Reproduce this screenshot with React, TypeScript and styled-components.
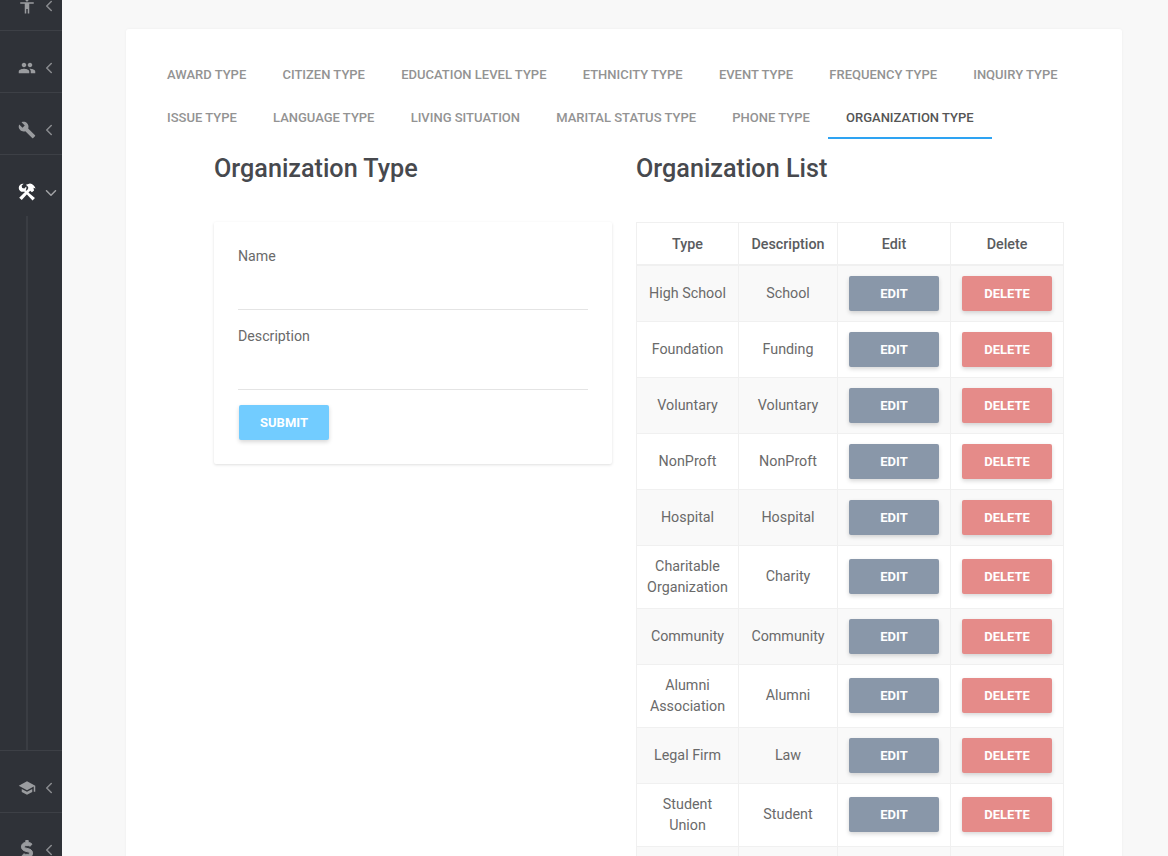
import React from 'react';
import styled, { createGlobalStyle } from 'styled-components';
import { MdAccessibility, MdPeople, MdBuild, MdSchool } from 'react-icons/md';
import { FaDollarSign } from 'react-icons/fa';
import { FiChevronLeft, FiChevronDown } from 'react-icons/fi';

const GlobalStyle = createGlobalStyle`
  html, body {
    margin: 0;
    height: 856px;
    overflow: hidden;
    background: #f8f8f8;
    font-family: Roboto, "Liberation Sans", sans-serif;
  }
`;

const Page = styled.div`
  display: flex;
  height: 856px;
  overflow: hidden;
`;

const Sidebar = styled.aside`
  flex: 0 0 62px;
  height: 856px;
  overflow: hidden;
  background: #2f3238;
`;

const NavList = styled.div`
  margin-top: -31px;
`;

const NavSection = styled.div<{ $height?: number }>`
  height: ${props => props.$height || 62}px;
  box-sizing: border-box;
  border-bottom: 1px solid #3d4046;
`;

const NavRow = styled.div<{ $active?: boolean }>`
  height: 61px;
  box-sizing: border-box;
  padding: 12px 0 0 18px;
  display: flex;
  align-items: center;
  color: ${props => (props.$active ? '#ffffff' : '#9a9c9f')};
`;

const NavIcon = styled.span`
  display: flex;
  width: 18px;
  justify-content: center;
  font-size: 20px;
`;

const NavArrow = styled.span<{ $open?: boolean }>`
  display: flex;
  margin-left: ${props => (props.$open ? 6 : 4)}px;
  margin-top: ${props => (props.$open ? 2 : 0)}px;
  font-size: 18px;
  color: ${props => (props.$open ? '#b5b6b8' : 'inherit')};
  opacity: 0.85;
`;

const DollarIcon = styled(FaDollarSign)`
  stroke: currentColor;
  stroke-width: 24px;
`;

const SubLine = styled.div`
  width: 2px;
  height: 534px;
  margin-left: 26px;
  background: #3a3d43;
`;

const Content = styled.main`
  flex: 1;
  padding: 29px 46px 0 64px;
`;

const Card = styled.section`
  background: #fff;
  border-radius: 3px;
  box-shadow: 0 0 3px rgba(0, 0, 0, 0.05);
  padding: 24px 23px 0;
  height: 900px;
`;

const Tabs = styled.nav`
  display: flex;
  flex-wrap: wrap;
`;

const Tab = styled.div<{ $active?: boolean }>`
  height: 43px;
  box-sizing: border-box;
  padding: 2px 18.2px 0 18px;
  display: flex;
  align-items: center;
  font-size: 13px;
  font-weight: 500;
  color: ${props => (props.$active ? '#555' : '#939393')};
  border-bottom: 2px solid ${props => (props.$active ? '#2ea3f2' : 'transparent')};
`;

const Columns = styled.div`
  display: flex;
  gap: 24px;
  padding-left: 65px;
  padding-top: 15px;
`;

const LeftColumn = styled.div`
  width: 398px;
`;

const RightColumn = styled.div`
  width: 428px;
`;

const Heading = styled.h2`
  margin: 0 0 38px;
  height: 30px;
  line-height: 30px;
  font-size: 25.2px;
  font-weight: 500;
  color: #47494e;
`;

const FormCard = styled.form`
  box-sizing: border-box;
  height: 242px;
  padding: 24px;
  background: #fff;
  border-radius: 2px;
  box-shadow: 0 1px 3px rgba(0, 0, 0, 0.13);
`;

const Field = styled.div`
  height: 64px;
  margin-bottom: 16px;
  box-sizing: border-box;
  border-bottom: 1px solid #e4e4e4;
`;

const Label = styled.label`
  display: block;
  padding-top: 1px;
  line-height: 18px;
  font-size: 14.2px;
  color: #6a6a6a;
`;

const Button = styled.button<{ $color: string }>`
  width: 90px;
  height: 35px;
  padding: 0;
  border: 0;
  border-radius: 2px;
  background: ${props => props.$color};
  color: #fff;
  font-family: inherit;
  font-size: 13px;
  font-weight: 700;
  box-shadow: 0 2px 4px rgba(0, 0, 0, 0.16);
`;

const SubmitButton = styled(Button)`
  display: block;
  margin: -1px 0 0 1px;
`;

const Table = styled.table`
  width: 427px;
  table-layout: fixed;
  border-collapse: collapse;
  font-size: 14.3px;
  color: #6a6a6a;
`;

const HeadCell = styled.th`
  height: 41px;
  padding: 0;
  border: 1px solid #f0f0f0;
  border-bottom-width: 2px;
  font-weight: 500;
  color: #5a5c60;
  text-align: center;
`;

const Row = styled.tr<{ $height: number }>`
  height: ${props => props.$height}px;
  &:nth-child(odd) {
    background: #f9f9f9;
  }
`;

const Cell = styled.td`
  padding: 0 8px;
  border: 1px solid #f0f0f0;
  line-height: 21px;
  text-align: center;
`;

const HammerWrench = () => (
  <svg width="19" height="18" viewBox="0 0 24 24" fill="currentColor">
    <path d="M1 6.5 C1 3 4 0.5 7.5 1 L4.8 3.8 L5.6 6.6 L8.4 7.4 L11 4.8 C11.5 7 11 8.6 10.2 9.6 L22.6 20 L19.4 23.2 L8.2 11.4 C4.8 12.6 1 10.4 1 6.5 Z" />
    <path d="M10.5 2.2 L16 0.8 C19.5 1.4 22.4 4 23.4 7.4 L20.6 6.2 L21.4 10 L18.6 12.2 L16.2 10.2 L5 22.8 L1.6 19.6 L13.4 8 L13.6 5.4 Z" />
  </svg>
);

const tabs = [
  'Award Type', 'Citizen Type', 'Education Level Type', 'Ethnicity Type', 'Event Type', 'Frequency Type', 'Inquiry Type',
  'Issue Type', 'Language Type', 'Living Situation', 'Marital Status Type', 'Phone Type', 'Organization Type',
];

const rows: { type: React.ReactNode; description: string; height: number }[] = [
  { type: 'High School', description: 'School', height: 56 },
  { type: 'Foundation', description: 'Funding', height: 56 },
  { type: 'Voluntary', description: 'Voluntary', height: 56 },
  { type: 'NonProft', description: 'NonProft', height: 56 },
  { type: 'Hospital', description: 'Hospital', height: 56 },
  { type: <>Charitable<br />Organization</>, description: 'Charity', height: 63 },
  { type: 'Community', description: 'Community', height: 56 },
  { type: <>Alumni<br />Association</>, description: 'Alumni', height: 63 },
  { type: 'Legal Firm', description: 'Law', height: 56 },
  { type: <>Student<br />Union</>, description: 'Student', height: 63 },
];

const App = () => {
  return (
    <>
      <GlobalStyle />
      <Page>
        <Sidebar>
          <NavList>
            <NavSection>
              <NavRow>
                <NavIcon><MdAccessibility /></NavIcon>
                <NavArrow><FiChevronLeft /></NavArrow>
              </NavRow>
            </NavSection>
            <NavSection>
              <NavRow>
                <NavIcon><MdPeople /></NavIcon>
                <NavArrow><FiChevronLeft /></NavArrow>
              </NavRow>
            </NavSection>
            <NavSection>
              <NavRow>
                <NavIcon><MdBuild /></NavIcon>
                <NavArrow><FiChevronLeft /></NavArrow>
              </NavRow>
            </NavSection>
            <NavSection $height={596}>
              <NavRow $active>
                <NavIcon><HammerWrench /></NavIcon>
                <NavArrow $open><FiChevronDown /></NavArrow>
              </NavRow>
              <SubLine />
            </NavSection>
            <NavSection>
              <NavRow>
                <NavIcon><MdSchool /></NavIcon>
                <NavArrow><FiChevronLeft /></NavArrow>
              </NavRow>
            </NavSection>
            <NavSection>
              <NavRow>
                <NavIcon><DollarIcon /></NavIcon>
                <NavArrow><FiChevronLeft /></NavArrow>
              </NavRow>
            </NavSection>
          </NavList>
        </Sidebar>
        <Content>
          <Card>
            <Tabs>
              {tabs.map(tab => (
                <Tab key={tab} $active={tab === 'Organization Type'}>{tab.toUpperCase()}</Tab>
              ))}
            </Tabs>
            <Columns>
              <LeftColumn>
                <Heading>Organization Type</Heading>
                <FormCard>
                  <Field><Label>Name</Label></Field>
                  <Field><Label>Description</Label></Field>
                  <SubmitButton type="button" $color="#72ccff">SUBMIT</SubmitButton>
                </FormCard>
              </LeftColumn>
              <RightColumn>
                <Heading>Organization List</Heading>
                <Table>
                  <colgroup>
                    <col style={{ width: 102 }} />
                    <col style={{ width: 99 }} />
                    <col style={{ width: 113 }} />
                    <col style={{ width: 113 }} />
                  </colgroup>
                  <thead>
                    <tr>
                      <HeadCell>Type</HeadCell>
                      <HeadCell>Description</HeadCell>
                      <HeadCell>Edit</HeadCell>
                      <HeadCell>Delete</HeadCell>
                    </tr>
                  </thead>
                  <tbody>
                    {rows.map(row => (
                      <Row key={row.description} $height={row.height}>
                        <Cell>{row.type}</Cell>
                        <Cell>{row.description}</Cell>
                        <Cell><Button type="button" $color="#8997a9">EDIT</Button></Cell>
                        <Cell><Button type="button" $color="#e58b89">DELETE</Button></Cell>
                      </Row>
                    ))}
                    <Row $height={56}>
                      <Cell />
                      <Cell />
                      <Cell />
                      <Cell />
                    </Row>
                  </tbody>
                </Table>
              </RightColumn>
            </Columns>
          </Card>
        </Content>
      </Page>
    </>
  );
};

export default App;
